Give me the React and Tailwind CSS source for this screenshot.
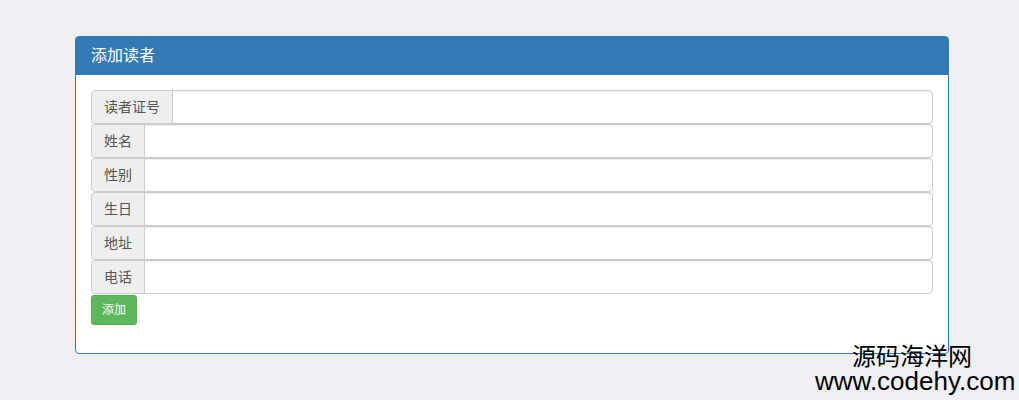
import React from 'react';

const fields = ['读者证号', '姓名', '性别', '生日', '地址', '电话'];

const App = () => {
  return (
    <div
      className="relative w-[1019px] h-[400px] bg-[#eff0f4] overflow-hidden pt-[36px] pl-[75px]"
      style={{ fontFamily: '"Liberation Sans", "Noto Sans CJK SC", sans-serif' }}
    >
      {/* Panel */}
      <div className="w-[874px] h-[318px] bg-white border border-[#337ab7] rounded-[4px]">
        <div className="h-[38px] bg-[#337ab7] px-[15px] flex items-center text-white text-[16px]">
          添加读者
        </div>
        <div className="p-[15px]">
          {fields.map((label) => (
            <div
              key={label}
              className="flex h-[34px] border border-[#ccc] rounded-[4px] shadow-[inset_0_1px_1px_rgba(0,0,0,0.075)]"
            >
              <span className="flex items-center px-[12px] bg-[#eee] border-r border-[#ccc] text-[14px] text-[#555] rounded-l-[4px]">
                {label}
              </span>
              <input type="text" className="flex-1 px-[12px] outline-none bg-transparent" />
            </div>
          ))}
          <button className="mt-px h-[30px] px-[10px] bg-[#5cb85c] border border-[#4cae4c] rounded-[3px] text-white text-[12px]">
            添加
          </button>
        </div>
      </div>

      {/* Watermark */}
      <div className="absolute right-[4px] top-[345px] w-[200px] text-center text-black">
        <div className="text-[24px] leading-[24px] pr-[6px]">源码海洋网</div>
        <div className="text-[26px] leading-[24px] whitespace-nowrap">www.codehy.com</div>
      </div>
    </div>
  );
};

export default App;
